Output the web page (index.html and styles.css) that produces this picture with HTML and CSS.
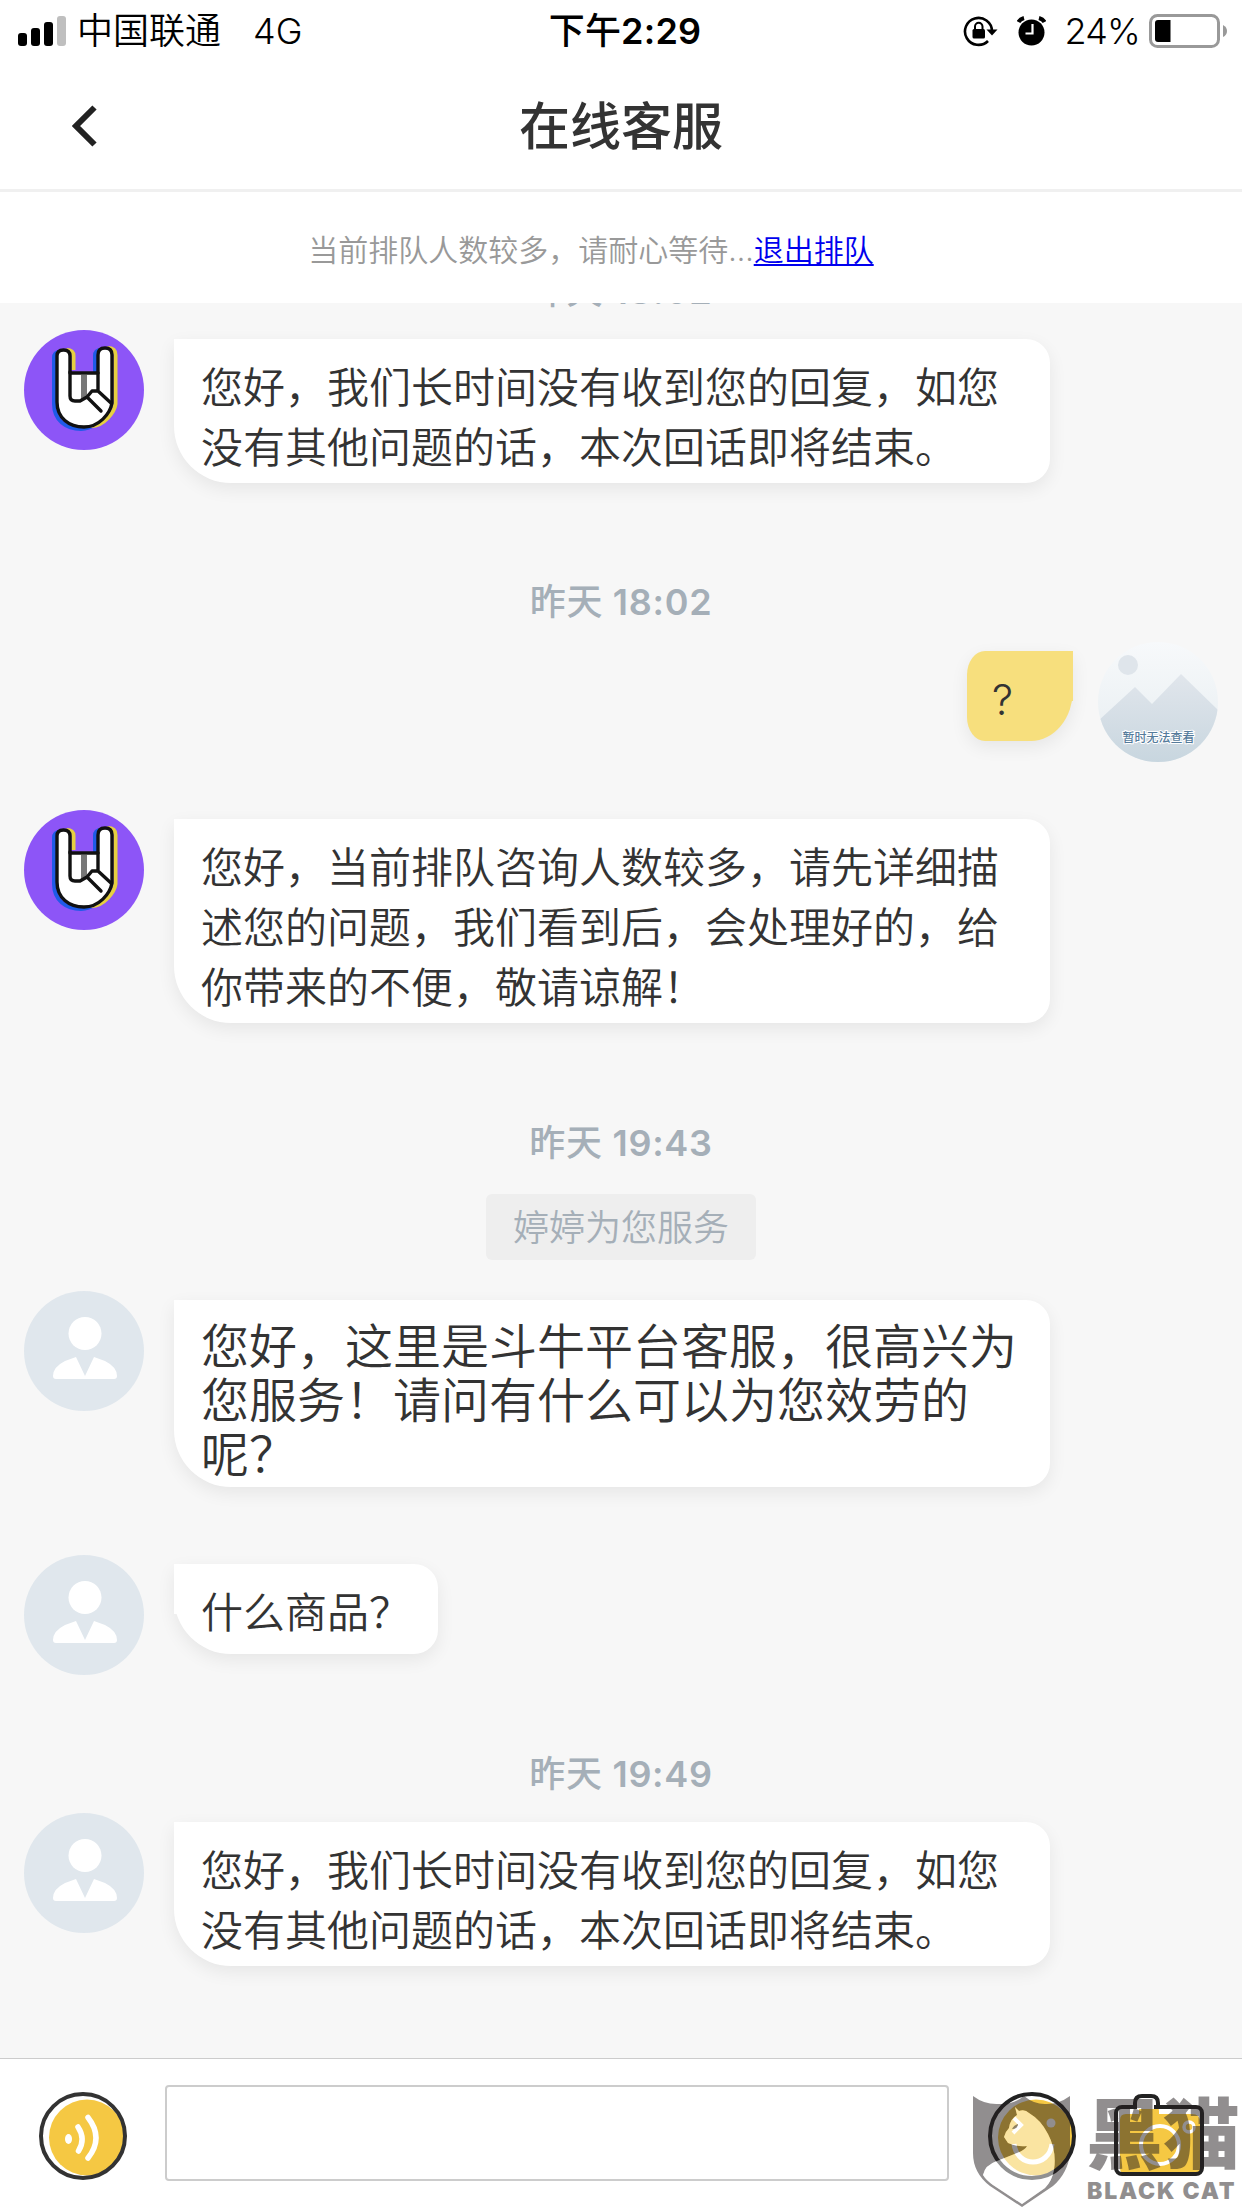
FILE: index.html
```html
<!DOCTYPE html>
<html lang="zh-CN">
<head>
<meta charset="utf-8">
<title>在线客服</title>
<link rel="stylesheet" href="styles.css">
</head>
<body>
<svg class="defs" width="0" height="0" aria-hidden="true">
  <symbol id="rock" viewBox="0 0 120 120">
    <rect width="120" height="120" fill="#8d55f7"/>
    <path fill="none" stroke="#1f5be8" stroke-width="4" transform="translate(-3 2)" d="M74 42V24Q74 18 80 18M39 20Q33 20 33 26V72C33 88 45 97 60 97Q68 97 74 92"/>
    <path fill="none" stroke="#e6d040" stroke-width="4" transform="translate(3.500 0)" d="M39 20Q46 20 46 26V40M80 18Q88 18 88 25V74C87 82 76 96 64 96"/>
    <path fill="#fff" stroke="#111" stroke-width="3.400" stroke-linejoin="round" d="M33 26Q33 20 39.500 20T46 26V43H74V25Q74 18 81 18T88 25V73C86 84 75 97 60 97C45 97 33 88 33 72Z"/>
    <path fill="#777" d="M57 45h6v24h-6z"/>
    <path fill="none" stroke="#111" stroke-width="3.400" stroke-linecap="round" stroke-linejoin="round" d="M46 42V66Q46 71 51 71H56L63 67M74 43V61H68L63 67L77 81M74 61L87 73"/>
  </symbol>
  <symbol id="person" viewBox="0 0 120 120">
    <rect width="120" height="120" fill="#e0e7ed"/>
    <circle cx="61" cy="42.500" r="16.500" fill="#fff"/>
    <path fill="#fff" d="M52 66L61 85L70 66L81 70Q93 76 93 85Q93 88 90 88H32Q29 88 29 85Q29 76 41 70Z"/>
  </symbol>
</svg>
<div class="screen">
  <header class="status">
    <div class="status-left">
      <svg class="signal" width="48" height="30" viewBox="0 0 48 30"><rect y="17" width="9" height="13" rx="3"/><rect x="13" y="12" width="9" height="18" rx="3"/><rect x="26" y="6" width="9" height="24" rx="3"/><rect x="39" width="9" height="30" rx="3" fill="#bfbfbf"/></svg>
      <span class="carrier">中国联通</span><span>4G</span>
    </div>
    <div class="clock"><span class="medium">下午</span>2:29</div>
    <div class="status-right">
      <svg width="35" height="32" viewBox="0 0 35 32"><path fill="none" stroke="#000" stroke-width="2.600" d="M29 16A13.500 13.500 0 1 0 25 26"/><path d="M23.500 14.500h11L29 20.500z"/><rect x="9.500" y="14" width="12.500" height="9.500" rx="1.500"/><path fill="none" stroke="#000" stroke-width="2" d="M12 15v-3.500a3.750 3.750 0 0 1 7.500 0V15"/></svg>
      <svg class="alarm" width="29" height="30" viewBox="0 0 29 30"><circle cx="14.500" cy="16.500" r="13"/><path fill="none" stroke="#000" stroke-width="4" d="M1.500 6Q3 3 7 2M27.500 6Q26 3 22 2"/><path fill="none" stroke="#fff" stroke-width="2.200" d="M15.500 8v9.500h-7"/></svg>
      <span>24%</span>
      <svg class="battery" width="79" height="34" viewBox="0 0 79 34"><rect x="1.500" y="1.500" width="68" height="31" rx="7" fill="none" stroke="#999" stroke-width="3"/><path d="M9 6h12.500v22H9q-3 0-3-3V9q0-3 3-3z"/><path fill="#999" d="M74 11q4 2 4 6t-4 6z"/></svg>
    </div>
  </header>
  <nav class="nav">
    <svg class="back" width="26" height="42" viewBox="0 0 26 42"><path d="M22.500 2.500L4 21L22.500 39.500" fill="none" stroke="#222" stroke-width="6"/></svg>
    <h1>在线客服</h1>
  </nav>
  <div class="notice"><span>当前排队人数较多，请耐心等待...</span><a href="#">退出排队</a></div>
  <main class="chat">
    <div class="time first"><span class="medium">昨天</span> 18:02</div>
    <section class="msg"><svg class="avatar"><use href="#rock"/></svg><div class="bubble"><p>您好，我们长时间没有收到您的回复，如您没有其他问题的话，本次回话即将结束。</p></div></section>
    <div class="time t2"><span class="medium">昨天</span> 18:02</div>
    <section class="msg mine"><div class="bubble short"><p>?</p></div>
      <svg class="avatar" viewBox="0 0 120 120"><defs><linearGradient id="sky" x2="0" y2="1"><stop stop-color="#f7f9fb"/><stop offset="1" stop-color="#e6edf0"/></linearGradient><linearGradient id="hill" x2="0" y2="1"><stop stop-color="#e1e6ec"/><stop offset="1" stop-color="#c8d6df"/></linearGradient></defs><rect width="120" height="120" fill="url(#sky)"/><circle cx="30" cy="23" r="10" fill="#dfe5eb"/><path fill="url(#hill)" d="M0 79L37 45L54 62L83 32L120 68V120H0Z"/><text class="unavailable" x="60.500" y="100">暂时无法查看</text></svg>
    </section>
    <section class="msg m3"><svg class="avatar"><use href="#rock"/></svg><div class="bubble"><p>您好，当前排队咨询人数较多，请先详细描述您的问题，我们看到后，会处理好的，给你带来的不便，敬请谅解！</p></div></section>
    <div class="time t3"><span class="medium">昨天</span> 19:43</div>
    <div class="served">婷婷为您服务</div>
    <section class="msg m4"><svg class="avatar"><use href="#person"/></svg><div class="bubble large"><p>您好，这里是斗牛平台客服，很高兴为您服务！请问有什么可以为您效劳的呢？</p></div></section>
    <section class="msg m5"><svg class="avatar"><use href="#person"/></svg><div class="bubble short"><p>什么商品？</p></div></section>
    <div class="time t4"><span class="medium">昨天</span> 19:49</div>
    <section class="msg"><svg class="avatar"><use href="#person"/></svg><div class="bubble"><p>您好，我们长时间没有收到您的回复，如您没有其他问题的话，本次回话即将结束。</p></div></section>
  </main>
  <footer class="composer">
    <svg class="voice" width="88" height="88" viewBox="0 0 88 88"><circle cx="48" cy="45.500" r="38" fill="#f5c843"/><circle cx="44" cy="44" r="42" fill="none" stroke="#333" stroke-width="4"/><ellipse cx="29.500" cy="47" rx="3.500" ry="5" fill="#fff"/><path d="M39 35Q47 47 39.500 59M49 25.500Q65 46 49 66" fill="none" stroke="#fff" stroke-width="5.500" stroke-linecap="round"/></svg>
    <input class="entry" type="text" aria-label="消息">
    <svg class="smile" width="88" height="88" viewBox="0 0 88 88"><circle cx="48" cy="45.500" r="38" fill="#f5c843"/><circle cx="44" cy="44" r="42" fill="none" stroke="#222" stroke-width="4"/><path d="M26 26L33 33L25 41" fill="none" stroke="#fff" stroke-width="4"/><circle cx="63" cy="31" r="4.500" fill="#fff"/><path d="M26 52C29 76 61 76 64 52" fill="none" stroke="#fff" stroke-width="5"/></svg>
    <svg class="camera" width="92" height="84" viewBox="0 0 92 84"><path fill="#f5c843" d="M7 26q0-6 6-6h13v-4q0-5 5-5h9q6 0 6 6v3h33q8 0 8 8v52H13q-6 0-6-6z"/><rect x="3" y="13" width="86" height="67" rx="6" fill="none" stroke="#222" stroke-width="4"/><path fill="#fff" d="M24 11h17v4H24z"/><path d="M22 13V9q0-7 7-7h9q7 0 7 7v4" fill="none" stroke="#222" stroke-width="4"/><circle cx="47" cy="51" r="19" fill="none" stroke="#fff" stroke-width="4"/><circle cx="76" cy="33" r="5" fill="none" stroke="#fff" stroke-width="3.500"/></svg>
    <div class="watermark">
      <svg class="shield" width="100" height="114" viewBox="0 0 100 114">
        <path fill="#231e20" fill-opacity=".5" fill-rule="evenodd" d="M0 1Q12 10 26 9Q40 10 51 1Q62 10 74 9Q86 9 97 1V58Q95 78 80 91L49 112L17 91Q0 78 0 58ZM42 12L46 16Q52 14 56 18Q68 25 75 39Q84 56 81 75Q79 86 72 93L49 109L20 90Q13 85 10 80Q12 70 24 66L44 58Q52 55 54 51Q43 52 35 48L31 42Q32 37 36 33Q37 24 44 20Z"/>
        <path fill="#fff" fill-opacity=".5" d="M42 12L46 16Q52 14 56 18Q68 25 75 39Q84 56 81 75Q79 86 72 93L49 109L20 90Q13 85 10 80Q12 70 24 66L44 58Q52 55 54 51Q43 52 35 48L31 42Q32 37 36 33Q37 24 44 20Z"/>
        <path fill="#231e20" fill-opacity=".5" d="M39 34Q41 30 45 29Q45 34 39 34Z"/>
      </svg>
      <div class="brand"><span class="brand-cn">黑猫</span><span class="brand-en">BLACK CAT</span></div>
    </div>
  </footer>
</div>
</body>
</html>
```
FILE: styles.css
```css
* { box-sizing: border-box; }
body { margin: 0; background: #fff; color: #333; font-family: Inter, "Noto Sans CJK SC", sans-serif; }
p, h1 { margin: 0; }
.defs { position: absolute; }
.medium { font-weight: 500; }
.screen { width: 1242px; height: 2208px; display: flex; flex-direction: column; overflow: hidden; }
.status { flex: none; height: 60px; display: grid; grid-template-columns: 1fr auto 1fr; align-items: center; padding: 0 14px 0 18px; color: #000; font-size: 36px; line-height: 62px; }
.status-left, .status-right { display: flex; align-items: center; height: 60px; }
.status-left { font-weight: 350; }
.carrier { margin: 0 32px 0 11px; }
.clock { padding-left: 4px; font-weight: 600; letter-spacing: .2px; }
.status-right { justify-content: flex-end; font-weight: 350; }
.alarm { margin: 0 18px 0 19px; }
.battery { margin-left: 9px; }
.status-right span { letter-spacing: -.8px; }
.nav { flex: none; height: 132px; border-bottom: 3px solid #f0f0f0; display: grid; grid-template-columns: 1fr auto 1fr; align-items: center; padding: 3px 72px 0; }
.nav h1 { font-size: 51px; font-weight: 500; line-height: 72px; padding-top: 2px; }
.notice { flex: none; height: 111px; padding: 1px 60px 0 0; display: flex; justify-content: center; align-items: center; font-size: 30px; font-weight: 350; color: #999; }
.notice a { color: #00e; text-decoration: underline; text-underline-offset: 3px; text-decoration-thickness: 2px; }
.chat { flex: none; height: 1755px; overflow: hidden; background: #f7f7f7; padding: 0 24px; }
.time { height: 44px; line-height: 45px; text-align: center; font-size: 36px; font-weight: 600; letter-spacing: .7px; color: #a5afb8; }
.first { margin-top: -34px; margin-bottom: 17px; }
.msg { display: flex; align-items: flex-start; gap: 30px; height: 120px; }
.avatar { flex: none; width: 120px; height: 120px; border-radius: 50%; }
.bubble { position: relative; margin-top: 9px; width: 876px; padding: 19px 28px 5px 27px; background: #fff; border-radius: 0 24px 24px 57px; box-shadow: 0 6px 18px rgba(0,0,0,.07); font-size: 42px; font-weight: 350; line-height: 60px; }
.bubble::before { content: ""; position: absolute; left: 0; top: 0; width: 4px; height: calc(100% - 40px); background: inherit; border-bottom-left-radius: 4px 60px; }
.short { width: auto; height: 90px; padding-right: 27px; }
.short::before { border-radius: 0; }
.large { padding-top: 20px; font-size: 48px; line-height: 54px; }
.mine { justify-content: flex-end; gap: 25px; }
.mine .bubble { width: 106px; padding-left: 25px; background: #f7df7d; border-radius: 18px 0 42px 18px / 24px 0 51px 24px; }
.mine .bubble::before { left: auto; right: 0; }
.unavailable { font-size: 12px; font-weight: 500; text-anchor: middle; fill: #557b9b; stroke: #fff; stroke-width: 2px; paint-order: stroke; }
.t2 { margin: 130px 0 18px; }
.m3 { margin-top: 48px; }
.t3 { margin: 191px 0 29px; }
.served { width: 270px; height: 66px; margin: 0 auto 31px; background: #eee; border-radius: 6px; color: #a5afb8; font-size: 36px; font-weight: 350; line-height: 68px; text-align: center; }
.m5 { margin-top: 144px; }
.t4 { margin: 77px 0 17px; }
.composer { position: relative; height: 150px; border-top: 1px solid #ccc; display: flex; align-items: flex-start; padding-left: 39px; background: #fff; }
.voice { margin-top: 33px; }
.entry { width: 784px; height: 96px; margin: 26px 39px 0 38px; padding: 0 20px; border: 2px solid #ccc; border-radius: 4px; background: #fff; font: inherit; font-size: 42px; }
.smile { margin-top: 33px; }
.camera { margin: 35px 0 0 37px; }
.watermark { position: absolute; left: 973px; top: 36px; display: flex; gap: 13px; color: rgba(35,30,32,.5); }
.brand { display: flex; flex-direction: column; width: 156px; white-space: nowrap; }
.brand-cn { height: 77px; font-size: 77px; font-weight: 900; line-height: 80px; }
.brand-en { margin-top: 4px; padding-left: 1px; font-size: 23px; font-weight: 900; line-height: 30px; letter-spacing: 1.800px; }
```
